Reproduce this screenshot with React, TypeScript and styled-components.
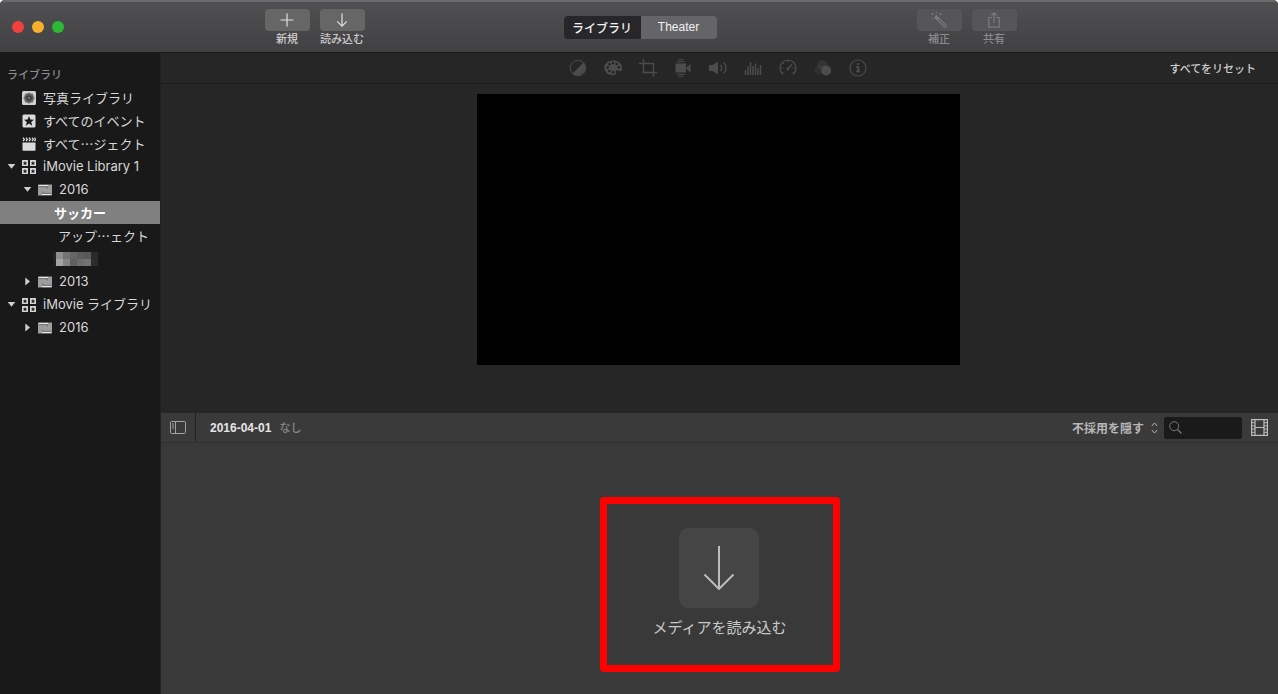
import React from "react";
import styled, { createGlobalStyle, css } from "styled-components";

const latin = `"Liberation Sans", "Noto Sans CJK JP", sans-serif`;
const wideLatin = `Inter, "Noto Sans CJK JP", sans-serif`;
const japanese = `"Noto Sans CJK JP", "Liberation Sans", sans-serif`;

const GlobalStyle = createGlobalStyle`
  *, *::before, *::after { box-sizing: border-box; }
  body { margin: 0; background: #f4f4f4; font-family: ${japanese}; }
  button, select, input { font: inherit; color: inherit; margin: 0; padding: 0; border: 0; background: none; }
  ul { list-style: none; margin: 0; padding: 0; }
  svg { display: block; flex: none; }
`;

const Window = styled.div`
  min-height: 100vh;
  display: flex;
  flex-direction: column;
  border-radius: 5px 5px 0 0;
  overflow: hidden;
  background: #191919;
  color: #dcdcdc;
`;

/* Title bar */

const TitleBar = styled.header`
  height: 53px;
  display: grid;
  grid-template-columns: 1fr auto 1fr;
  padding-left: 2px;
  background: linear-gradient(#504f51, #414042);
  border-top: 2px solid #6b6b6c;
  border-bottom: 1px solid #1a1a1a;
`;

const TitleSide = styled.div<{ $end?: boolean }>`
  display: flex;
  justify-content: ${(p) => (p.$end ? "flex-start" : "space-between")};
  padding: ${(p) => (p.$end ? "0 0 0 200px" : "0 199px 0 10px")};
`;

const TrafficLights = styled.div`
  display: flex;
  align-items: center;
  gap: 8px;
`;

const Light = styled.button<{ $color: string }>`
  width: 12px;
  height: 12px;
  border-radius: 50%;
  background: ${(p) => p.$color};
`;

const ToolGroup = styled.div`
  display: flex;
  gap: 10px;
  padding-top: 7px;
`;

const ToolButton = styled.button`
  width: 45px;
  display: flex;
  flex-direction: column;
  align-items: center;
  justify-content: flex-start;
  font-size: 11px;
  line-height: 15px;
  font-weight: 500;
  white-space: nowrap;
  color: #cccccc;
  &:disabled {
    color: #8a8a8b;
  }
`;

const ToolFace = styled.span<{ $dim?: boolean }>`
  width: 100%;
  height: 22px;
  display: grid;
  place-items: center;
  border-radius: 4px;
  background: ${(p) => (p.$dim ? "#565557" : "#676667")};
  color: ${(p) => (p.$dim ? "#7b7b7b" : "#e0e0e0")};
`;

const Segments = styled.div`
  align-self: center;
  display: flex;
  border-radius: 4px;
  overflow: hidden;
`;

const Segment = styled.button<{ $active?: boolean }>`
  width: ${(p) => (p.$active ? 77 : 76)}px;
  height: 23px;
  font-size: 12px;
  font-family: ${(p) => (p.$active ? japanese : latin)};
  font-weight: ${(p) => (p.$active ? 500 : 400)};
  line-height: 23px;
  color: #f2f2f2;
  background: ${(p) => (p.$active ? "#272628" : "#656466")};
`;

/* Sidebar */

const Body = styled.div`
  flex: 1;
  display: grid;
  grid-template-columns: 160px 1fr;
`;

const Sidebar = styled.nav`
  padding-top: 10px;
  background: #191919;
`;

const SidebarTitle = styled.h2`
  margin: 0;
  padding-left: 7px;
  font-size: 11px;
  font-weight: 500;
  line-height: 23px;
  color: #8d8d8d;
`;

const Row = styled.button<{ $indent: number; $selected?: boolean; $latin?: boolean }>`
  width: 100%;
  height: 23px;
  display: flex;
  align-items: center;
  padding-left: ${(p) => p.$indent}px;
  text-align: left;
  white-space: nowrap;
  font-family: ${(p) => (p.$latin ? wideLatin : japanese)};
  font-size: 13px;
  line-height: 23px;
  color: #d8d8d8;
  ${(p) =>
    p.$selected &&
    css`
      background: #808080;
      color: #fff;
      font-weight: 700;
    `}
`;

const DisclosureSlot = styled.span`
  width: 22px;
  display: grid;
  place-items: center;
`;

const RowIcon = styled.span`
  width: 14px;
  margin-right: 7px;
`;

/* Main column */

const Main = styled.main`
  display: grid;
  grid-template-rows: auto auto 1fr;
  min-width: 0;
  border-left: 1px solid #212121;
`;

const Viewer = styled.section`
  background: #262626;
`;

const AdjustBar = styled.div`
  height: 31px;
  display: grid;
  grid-template-columns: 1fr auto 1fr;
  align-items: center;
  padding: 0 22px 0 19px;
  border-bottom: 1px solid #1b1b1b;
`;

const AdjustTools = styled.div`
  grid-column: 2;
  display: flex;
  gap: 17px;
`;

const IconButton = styled.button`
  width: 18px;
  height: 18px;
  color: #4c4c4c;
`;

const ResetButton = styled.button`
  justify-self: end;
  font-size: 11px;
  line-height: 18px;
  font-weight: 500;
  color: #cfcfcf;
`;

const Stage = styled.div`
  display: flex;
  justify-content: center;
  padding: 10px 2px 48px 0;
`;

const Screen = styled.div`
  width: 100%;
  max-width: 483px;
  aspect-ratio: 483 / 271;
  background: #000;
`;

const BrowserBar = styled.div`
  height: 30px;
  display: flex;
  align-items: center;
  padding-right: 10px;
  background: #3a3a3a;
  border-bottom: 1px solid #303030;
`;

const PaneToggle = styled.button`
  width: 35px;
  align-self: stretch;
  display: grid;
  place-items: center;
  color: #a3a3a3;
  border-right: 1px solid #222;
`;

const EventTitle = styled.h1`
  flex: 1;
  margin: 0;
  padding-left: 14px;
  font-family: ${latin};
  font-size: 12px;
  line-height: 18px;
  font-weight: 700;
  color: #e6e6e6;
`;

const EventDate = styled.span`
  margin-left: 8px;
  font-size: 11px;
  font-weight: 500;
  color: #888;
`;

const FilterLabel = styled.label`
  display: flex;
  align-items: center;
  gap: 6px;
  margin-right: 6px;
  color: #b8b8b8;
`;

const FilterSelect = styled.select`
  appearance: none;
  font-size: 12px;
  line-height: 18px;
  font-weight: 700;
  outline: none;
`;

const SearchBox = styled.label`
  width: 78px;
  height: 22px;
  display: flex;
  align-items: center;
  gap: 4px;
  padding: 0 5px;
  margin-right: 9px;
  border-radius: 2px;
  background: #1a1a1a;
  color: #777;
`;

const SearchInput = styled.input`
  min-width: 0;
  flex: 1;
  font-size: 12px;
  outline: none;
`;

const FilmButton = styled.button`
  color: #bdbdbd;
`;

const MediaArea = styled.section`
  display: flex;
  justify-content: center;
  align-items: flex-start;
  padding: 54px 0 22px;
  background: #393939;
`;

const Highlight = styled.div`
  width: 240px;
  padding: 24px 0 27px;
  display: flex;
  justify-content: center;
  border: 7px solid #fd0000;
  border-radius: 4px;
`;

const ImportButton = styled.button`
  display: flex;
  flex-direction: column;
  align-items: center;
  gap: 8px;
  font-size: 15px;
  line-height: 22px;
  white-space: nowrap;
  color: #cacaca;
`;

const ImportFace = styled.span`
  width: 80px;
  height: 80px;
  display: grid;
  place-items: center;
  border-radius: 9px;
  background: #454545;
  color: #bcbcbc;
`;

/* Drawings */

const Disclosure = ({ open }: { open: boolean }) => (
  <svg width="9" height="9" viewBox="0 0 9 9" fill="#cfcfcf" aria-hidden="true">
    <path d={open ? "M.7 2h7.6L4.5 6.8z" : "M2.300.5v8L7 4.5z"} />
  </svg>
);

const STAR = "M0-4.6 1.2-1.5 4.4-1.4 1.9.6 2.8 3.8 0 2-2.8 3.8-1.9.6-4.4-1.4-1.2-1.5z";

const PhotosIcon = () => (
  <svg width="14" height="14" viewBox="0 0 14 14" aria-hidden="true">
    <rect width="14" height="14" rx="1.5" fill="#d0d0d0" />
    {[0, 45, 90, 135, 180, 225, 270, 315].map((a) => (
      <ellipse key={a} cx="7" cy="4" rx="1.9" ry="2.6" fill="#2a2a2a" fillOpacity=".6" transform={`rotate(${a} 7 7)`} />
    ))}
    <circle cx="7" cy="7" r="1" fill="#777" />
  </svg>
);

const StarIcon = () => (
  <svg width="14" height="14" viewBox="0 0 14 14" aria-hidden="true">
    <rect x=".5" y=".5" width="13" height="13" rx="1.5" fill="#dadada" />
    <path d={STAR} transform="translate(7 7.3) scale(1.15)" fill="#191919" />
  </svg>
);

const ClapperIcon = () => (
  <svg width="14" height="14" viewBox="0 0 14 14" aria-hidden="true">
    <path d="M.5 5.500h13V13a.8.8 0 0 1-.8.8H1.300a.8.8 0 0 1-.8-.8z" fill="#dadada" />
    <path d="M1 .6 2.400 2.400 1 4.200M4 .6 5.400 2.400 4 4.200M7 .6 8.400 2.400 7 4.200M10 .6 11.400 2.400 10 4.200M12.600.6 13.400 2.400 12.600 4.200" fill="none" stroke="#dadada" strokeWidth="1.300" />
  </svg>
);

const LibraryIcon = () => (
  <svg width="14" height="14" viewBox="0 0 14 14" aria-hidden="true">
    {[[0, 0], [8, 0], [0, 8], [8, 8]].map(([x, y]) => (
      <g key={`${x}-${y}`} transform={`translate(${x} ${y})`}>
        <rect width="6" height="6" rx=".5" fill="#dadada" />
        <path d={STAR} transform="translate(3 3.200) scale(.54)" fill="#191919" />
      </g>
    ))}
  </svg>
);

const EventIcon = () => (
  <svg width="14" height="12" viewBox="0 0 14 12" aria-hidden="true">
    <rect y=".5" width="14" height="11" fill="#9d9d9d" />
    <path d="M1 1.500h9" stroke="#e8e8e8" strokeWidth="1.200" />
    <path d="M4 10.500h9" stroke="#e8e8e8" strokeWidth="1.200" />
    <path d="M1 2.700h8.500v1.800M4.500 7.500v1.800H13" fill="none" stroke="#6e6e6e" />
  </svg>
);

const MOSAIC = [
  ["#242424", "#8f8f8f", "#747474", "#666666", "#5c5c5c", "#585858", "#292929"],
  ["#202020", "#a4a4a4", "#858585", "#606060", "#6d6d6d", "#727272", "#2c2c2c"],
];

const Mosaic = () => (
  <svg width="45" height="14" viewBox="0 0 45 14" role="img" aria-label="hidden">
    {MOSAIC.map((line, y) =>
      line.map((fill, x) => (
        <rect key={`${x}-${y}`} x={x === 0 ? 0 : 3 + (x - 1) * 7} y={y * 7} width={x === 0 ? 3 : 7} height="7" fill={fill} />
      )),
    )}
  </svg>
);

const Stroke = ({ size, box, w = 1, children }: { size: [number, number]; box?: string; w?: number; children: React.ReactNode }) => (
  <svg
    width={size[0]}
    height={size[1]}
    viewBox={box ?? `0 0 ${size[0]} ${size[1]}`}
    fill="none"
    stroke="currentColor"
    strokeWidth={w}
    aria-hidden="true"
  >
    {children}
  </svg>
);

const adjustTools: { name: string; art: React.ReactNode }[] = [
  {
    name: "カラーバランス",
    art: (
      <>
        <circle cx="9" cy="9" r="7.800" />
        <path d="M14.500 3.500A7.800 7.800 0 0 1 3.500 14.500z" fill="currentColor" stroke="none" />
      </>
    ),
  },
  {
    name: "色補正",
    art: (
      <>
        <path
          d="M9.500 1.500C4.500 1.500.2 4.400.2 8.700c0 4.400 4 7.500 8.600 7.500 2.200 0 3.300-1 3-2.200-.3-1.300-.2-2.600 1.200-2.700 1.500-.1 1.700 1 3 1 1.400 0 2.200-1.400 2.200-3.400 0-4.200-4-7.400-8.700-7.400z"
          fill="currentColor"
          stroke="none"
        />
        <g fill="#262626" stroke="none">
          <circle cx="3.600" cy="8.500" r="1.300" />
          <circle cx="5.500" cy="5.300" r="1.300" />
          <circle cx="9" cy="4" r="1.300" />
          <circle cx="12.600" cy="5" r="1.300" />
          <circle cx="5.300" cy="12" r="1.300" />
          <circle cx="9" cy="13.400" r="1.300" />
          <circle cx="15" cy="8.200" r="1.300" />
        </g>
      </>
    ),
  },
  { name: "クロップ", art: <path d="M0 4.500h14.500V18M4.500 0v13.500H18" strokeWidth="1.400" /> },
  {
    name: "手ぶれ補正",
    art: (
      <>
        <path d="M1.500 4.500h10.500v9H1.500zM12.500 8.500 16.500 5v8.500l-4-3.500z" fill="currentColor" stroke="none" />
        <path d="M3 2.700h8M4.500.7h5M3 15.400h8M4.500 17.300h5" />
      </>
    ),
  },
  {
    name: "ボリューム",
    art: (
      <>
        <path d="M0 6h3.500L9 2.500v13L3.500 12H0z" fill="currentColor" stroke="none" />
        <path d="M11.500 6c1.600 1.800 1.600 4.200 0 6M14.800 3.500c3 3.200 3 7.800 0 11" strokeWidth="1.300" />
      </>
    ),
  },
  {
    name: "ノイズ除去",
    art: <path d="M1.500 16v-5M4 16V7.500M6.500 16V3M9 16V7M11.500 16V4.500M14 16V9M16.500 16V6" strokeWidth="1.500" />,
  },
  {
    name: "速度",
    art: (
      <>
        <path d="M4 15.300A8 8 0 1 1 14 15.300" strokeWidth="1.300" />
        <path d="M9 9.800 13 5.500" strokeWidth="1.600" />
        <path d="M9 1.500v2M3.700 3.700l1.300 1.300M1.500 9h2M14.500 9h2M4 14.500l1.200-1.200M14 14.500l-1.200-1.200" />
        <circle cx="8.800" cy="10" r="1.400" fill="currentColor" stroke="none" />
      </>
    ),
  },
  {
    name: "エフェクト",
    art: (
      <g fill="currentColor" stroke="none">
        <circle cx="8.500" cy="6" r="5" fillOpacity=".35" />
        <circle cx="5.500" cy="11" r="5" fillOpacity=".25" />
        <circle cx="12.200" cy="11.500" r="5" />
      </g>
    ),
  },
  {
    name: "情報",
    art: (
      <>
        <circle cx="9" cy="9" r="8" strokeWidth="1.200" />
        <path d="M7.200 7.700h2v4.500M7 12.500h4.200" strokeWidth="1.400" />
        <path d="M9.200 7v5.500" strokeWidth="2" />
        <circle cx="9.100" cy="5.100" r="1.200" fill="currentColor" stroke="none" />
      </>
    ),
  },
];

type Item = {
  label: React.ReactNode;
  indent: number;
  icon?: React.ReactNode;
  open?: boolean;
  latin?: boolean;
  selected?: boolean;
};

const items: Item[] = [
  { label: "写真ライブラリ", indent: 22, icon: <PhotosIcon /> },
  { label: "すべてのイベント", indent: 22, icon: <StarIcon /> },
  { label: "すべて…ジェクト", indent: 22, icon: <ClapperIcon /> },
  { label: "iMovie Library 1", indent: 0, icon: <LibraryIcon />, open: true, latin: true },
  { label: "2016", indent: 16, icon: <EventIcon />, open: true, latin: true },
  { label: "サッカー", indent: 54, selected: true },
  { label: "アップ…ェクト", indent: 58 },
  { label: <Mosaic />, indent: 53 },
  { label: "2013", indent: 16, icon: <EventIcon />, open: false, latin: true },
  { label: "iMovie ライブラリ", indent: 0, icon: <LibraryIcon />, open: true, latin: true },
  { label: "2016", indent: 16, icon: <EventIcon />, open: false, latin: true },
];

export default function App() {
  return (
    <Window lang="ja">
      <GlobalStyle />
      <TitleBar>
        <TitleSide>
          <TrafficLights>
            <Light $color="#f2403f" aria-label="閉じる" />
            <Light $color="#f6b02c" aria-label="しまう" />
            <Light $color="#2cb935" aria-label="拡大" />
          </TrafficLights>
          <ToolGroup>
            <ToolButton>
              <ToolFace>
                <Stroke size={[14, 14]}>
                  <path d="M7 .5v13M.5 7h13" strokeWidth="1.200" />
                </Stroke>
              </ToolFace>
              新規
            </ToolButton>
            <ToolButton>
              <ToolFace>
                <Stroke size={[12, 14]}>
                  <path d="M6 .5v12.500M1.200 8.300 6 13.100l4.800-4.800" strokeWidth="1.200" />
                </Stroke>
              </ToolFace>
              読み込む
            </ToolButton>
          </ToolGroup>
        </TitleSide>
        <Segments>
          <Segment $active>ライブラリ</Segment>
          <Segment>Theater</Segment>
        </Segments>
        <TitleSide $end>
          <ToolGroup>
            <ToolButton disabled>
              <ToolFace $dim>
                <Stroke size={[16, 16]}>
                  <path d="M4.200 4.200 15 14.800" strokeWidth="3.400" />
                  <path d="M7.500 7.400 14.300 14.100" stroke="#565557" strokeWidth="1.200" />
                  <path d="M1.500 1v2M.5 2h2M9.500 1v2M8.500 2h2M5.500 0v1.500M1 6.500h1.500" />
                </Stroke>
              </ToolFace>
              補正
            </ToolButton>
            <ToolButton disabled>
              <ToolFace $dim>
                <Stroke size={[12, 16]}>
                  <path d="M4 5.500H.8v9.700h10.400V5.500H8M6 11V1M3.500 3.300 6 .8l2.500 2.500" strokeWidth="1.200" />
                </Stroke>
              </ToolFace>
              共有
            </ToolButton>
          </ToolGroup>
        </TitleSide>
      </TitleBar>

      <Body>
        <Sidebar aria-label="ライブラリ">
          <SidebarTitle>ライブラリ</SidebarTitle>
          <ul>
            {items.map((item, i) => (
              <li key={i}>
                <Row
                  $indent={item.indent}
                  $latin={item.latin}
                  $selected={item.selected}
                  aria-expanded={item.open}
                >
                  {item.open !== undefined && (
                    <DisclosureSlot>
                      <Disclosure open={item.open} />
                    </DisclosureSlot>
                  )}
                  {item.icon && <RowIcon>{item.icon}</RowIcon>}
                  {item.label}
                </Row>
              </li>
            ))}
          </ul>
        </Sidebar>

        <Main>
          <Viewer>
            <AdjustBar>
              <AdjustTools>
                {adjustTools.map((tool) => (
                  <IconButton key={tool.name} aria-label={tool.name} disabled>
                    <Stroke size={[18, 18]}>{tool.art}</Stroke>
                  </IconButton>
                ))}
              </AdjustTools>
              <ResetButton>すべてをリセット</ResetButton>
            </AdjustBar>
            <Stage>
              <Screen />
            </Stage>
          </Viewer>

          <BrowserBar>
            <PaneToggle aria-label="サイドバーを表示">
              <Stroke size={[16, 13]}>
                <rect x=".5" y=".5" width="15" height="12" rx="1" />
                <path d="M5.500 .5v12M2 3h2M2 5h2M2 7h2" />
              </Stroke>
            </PaneToggle>
            <EventTitle>
              2016-04-01<EventDate>なし</EventDate>
            </EventTitle>
            <FilterLabel>
              <FilterSelect aria-label="表示するクリップ" defaultValue="hide">
                <option value="hide">不採用を隠す</option>
              </FilterSelect>
              <Stroke size={[7, 12]}>
                <path d="M.8 4 3.500 1l2.700 3M.8 8l2.700 3 2.700-3" />
              </Stroke>
            </FilterLabel>
            <SearchBox>
              <Stroke size={[13, 13]}>
                <circle cx="5.200" cy="5.200" r="4.500" />
                <path d="m8.500 8.500 4 4" strokeWidth="1.200" />
              </Stroke>
              <SearchInput type="search" aria-label="検索" />
            </SearchBox>
            <FilmButton aria-label="フィルムストリップ">
              <Stroke size={[17, 17]}>
                <path d="M.6.6h15.800v15.800H.6zM4 .6v15.800M13 .6v15.800M4 8.500h9" strokeWidth="1.200" />
                <path d="M.6 3.700H4M.6 6.900H4M.6 10.100H4M.6 13.300H4M13 3.700h3.400M13 6.900h3.400M13 10.100h3.400M13 13.300h3.400" />
              </Stroke>
            </FilmButton>
          </BrowserBar>

          <MediaArea>
            <Highlight>
              <ImportButton>
                <ImportFace>
                  <Stroke size={[32, 44]} w={2}>
                    <path d="M16 0v42M1.500 28.500 16 43l14.500-14.500" />
                  </Stroke>
                </ImportFace>
                メディアを読み込む
              </ImportButton>
            </Highlight>
          </MediaArea>
        </Main>
      </Body>
    </Window>
  );
}
